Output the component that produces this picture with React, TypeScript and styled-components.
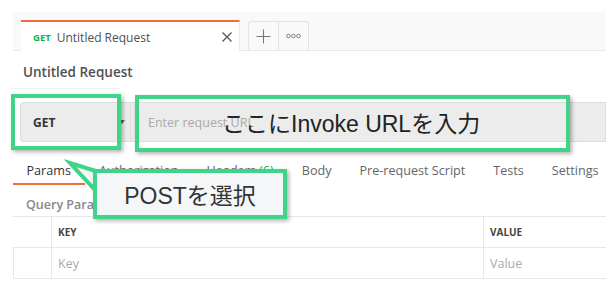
import React from 'react';
import styled, {createGlobalStyle} from 'styled-components';

const GlobalStyle = createGlobalStyle`
    body {
        margin: 0;
        background: #ffffff;
        font-family: "Open Sans", "Noto Sans", sans-serif;
    }
`

const green = '#3fd488';
const orange = '#f26b3a';

const tabs = [
    {label: 'Params', active: true},
    {label: 'Authorization'},
    {label: 'Headers', count: 6},
    {label: 'Body'},
    {label: 'Pre-request Script'},
    {label: 'Tests'},
    {label: 'Settings'},
];

export default function App() {
    return (
        <>
            <GlobalStyle/>
            <Screen>
                <TabBar>
                    <ActiveTab>
                        <Method>GET</Method>
                        <TabTitle>Untitled Request</TabTitle>
                        <svg width="12" height="12" viewBox="0 0 12 12">
                            <path d="M1.5 1.5l9 9M10.5 1.5l-9 9" stroke="#555" strokeWidth="1.3"/>
                        </svg>
                    </ActiveTab>
                    <TabActions>
                        <ActionCell>
                            <svg width="15" height="15" viewBox="0 0 15 15">
                                <path d="M7.5 0.5v14M0.5 7.5h14" stroke="#777" strokeWidth="1.1"/>
                            </svg>
                        </ActionCell>
                        <ActionCell>
                            <svg width="15" height="6" viewBox="0 0 15 6">
                                <circle cx="2.5" cy="3" r="1.8" fill="none" stroke="#777" strokeWidth="0.9"/>
                                <circle cx="7.5" cy="3" r="1.8" fill="none" stroke="#777" strokeWidth="0.9"/>
                                <circle cx="12.5" cy="3" r="1.8" fill="none" stroke="#777" strokeWidth="0.9"/>
                            </svg>
                        </ActionCell>
                    </TabActions>
                </TabBar>

                <RequestName>Untitled Request</RequestName>

                <RequestRow>
                    <MethodSelect>
                        <span>GET</span>
                        <svg width="6" height="4" viewBox="0 0 6 4">
                            <path d="M0 0h6L3 4z" fill="#666"/>
                        </svg>
                    </MethodSelect>
                    <UrlInput>Enter request URL</UrlInput>
                </RequestRow>

                <SectionTabs>
                    {tabs.map(t => (
                        <SectionTab key={t.label} active={t.active}>
                            {t.label}
                            {t.count !== undefined && <Count> ({t.count})</Count>}
                        </SectionTab>
                    ))}
                </SectionTabs>

                <SubTitle>Query Params</SubTitle>

                <ParamsTable>
                    <Cell/>
                    <HeadCell>KEY</HeadCell>
                    <HeadCell>VALUE</HeadCell>
                    <Cell/>
                    <PlaceholderCell>Key</PlaceholderCell>
                    <PlaceholderCell>Value</PlaceholderCell>
                </ParamsTable>

                <Frame style={{left: 11, top: 94, width: 110, height: 56}}/>
                <Frame style={{left: 135, top: 95, width: 435, height: 57}}/>
                <BigNote style={{left: 222, top: 108}}>ここにInvoke URLを入力</BigNote>

                <Pointer width="32" height="36" viewBox="0 0 32 36">
                    <path d="M2 2L28 10V30Z" fill="#f5f6f8" stroke={green} strokeWidth="4" strokeLinejoin="miter"/>
                </Pointer>
                <Callout>POSTを選択</Callout>
            </Screen>
        </>
    );
}

const Screen = styled.div`
    position: relative;
    width: 606px;
    height: 300px;
    overflow: hidden;
    padding-top: 12px;
    box-sizing: border-box;
`

const TabBar = styled.div`
    margin-left: 13px;
    height: 39px;
    box-sizing: border-box;
    background: #f9f9f9;
    border-bottom: 1px solid #e8e8e8;
    display: flex;
    align-items: flex-end;
    padding-left: 8px;
    gap: 8px;
`

const ActiveTab = styled.div`
    width: 219px;
    height: 31px;
    margin-bottom: -1px;
    box-sizing: border-box;
    background: #ffffff;
    border-top: 2px solid ${orange};
    border-right: 1px solid #ececec;
    display: flex;
    align-items: center;
    padding: 1px 6px 0 12px;

    svg {
        margin-left: auto;
    }
`

const Method = styled.span`
    font-size: 9.5px;
    font-weight: 700;
    color: #0cb34f;
    margin-right: 6px;
`

const TabTitle = styled.span`
    font-size: 12px;
    color: #505050;
`

const TabActions = styled.div`
    display: flex;
    height: 29px;
    box-sizing: border-box;
    border: 1px solid #e3e3e3;
    border-bottom: none;
    border-radius: 3px 3px 0 0;
    background: #f9f9f9;
`

const ActionCell = styled.div`
    width: 29px;
    display: flex;
    align-items: center;
    justify-content: center;

    & + & {
        border-left: 1px solid #e3e3e3;
    }
`

const RequestName = styled.div`
    margin: 11px 0 0 10px;
    padding: 0 0 6px 13px;
    width: 97px;
    font-size: 13.5px;
    font-weight: 600;
    color: #505050;
    line-height: 20px;
    white-space: nowrap;
    border-bottom: 1px solid #f2f2f2;
`

const RequestRow = styled.div`
    display: flex;
    height: 40px;
    margin: 13px 0 0 20px;
`

const MethodSelect = styled.div`
    width: 111px;
    box-sizing: border-box;
    background: #ececec;
    border: 1px solid #dedede;
    border-radius: 3px 0 0 3px;
    display: flex;
    align-items: center;
    justify-content: space-between;
    padding: 0 5px 0 12px;
    font-size: 12px;
    font-weight: 700;
    color: #333;
`

const UrlInput = styled.div`
    flex: 1;
    box-sizing: border-box;
    background: #ececec;
    border: 1px solid #dedede;
    border-left: none;
    display: flex;
    align-items: center;
    padding-left: 17px;
    font-size: 12.5px;
    color: #aaaaaa;
`

const SectionTabs = styled.div`
    display: flex;
    margin: 15px 0 0 13px;
    height: 28px;
`

const SectionTab = styled.div<{ active?: boolean }>`
    padding: 0 14.5px 0 13.5px;
    font-size: 12.6px;
    line-height: 28px;
    white-space: nowrap;
    color: ${props => props.active ? '#333' : '#666'};
    border-bottom: 2px solid ${props => props.active ? orange : 'transparent'};
`

const Count = styled.span`
    color: #0cb34f;
`

const SubTitle = styled.div`
    margin: 9px 0 0 26px;
    font-size: 12.5px;
    font-weight: 600;
    color: #888;
    line-height: 22px;
`

const ParamsTable = styled.div`
    display: grid;
    grid-template-columns: 38px 432px 1fr;
    grid-auto-rows: 31px;
    margin: 0 0 0 13px;
    border-top: 1px solid #e8e8e8;
`

const Cell = styled.div`
    border-bottom: 1px solid #e8e8e8;
    display: flex;
    align-items: center;
    padding-left: 6px;

    & + & {
        border-left: 1px solid #e8e8e8;
    }
`

const HeadCell = styled(Cell)`
    font-size: 10px;
    font-weight: 700;
    color: #444;
`

const PlaceholderCell = styled(Cell)`
    font-size: 12.5px;
    color: #aaaaaa;
`

const Frame = styled.div`
    position: absolute;
    box-sizing: border-box;
    border: 4px solid ${green};
    box-shadow: 2px 2px 4px rgba(0, 0, 0, 0.3);
`

const BigNote = styled.div`
    position: absolute;
    font-family: "Liberation Sans", "Noto Sans CJK JP", sans-serif;
    font-size: 23px;
    line-height: 32px;
    color: #222;
    white-space: nowrap;
`

const Pointer = styled.svg`
    position: absolute;
    left: 68px;
    top: 161px;
    overflow: visible;
`

const Callout = styled.div`
    position: absolute;
    left: 93px;
    top: 169px;
    width: 194px;
    height: 50px;
    box-sizing: border-box;
    border: 4px solid ${green};
    background: #f5f6f8;
    box-shadow: 2px 2px 4px rgba(0, 0, 0, 0.3);
    display: flex;
    align-items: center;
    justify-content: center;
    font-family: "Liberation Sans", "Noto Sans CJK JP", sans-serif;
    font-size: 23px;
    color: #333;
`
